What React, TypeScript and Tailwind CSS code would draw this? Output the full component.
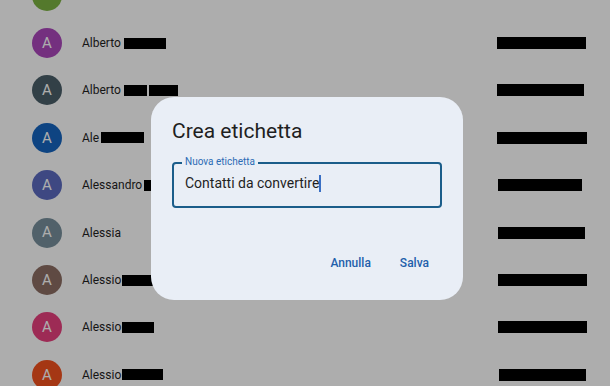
type Contact = {
  name: string;
  color: string;
  bars: string[];
  tail: string | null;
};

const contacts: Contact[] = [
  { name: "Aldo", color: "bg-[#7cb342]", bars: [], tail: null },
  { name: "Alberto", color: "bg-[#ab47bc]", bars: ["ml-[3px] w-[42px]"], tail: "w-[89px] mr-[24px]" },
  {
    name: "Alberto",
    color: "bg-[#4b5f69]",
    bars: ["ml-[3px] w-[23px]", "ml-[2px] w-[29px]"],
    tail: "w-[87px] mr-[26px]",
  },
  { name: "Ale", color: "bg-[#1565c0]", bars: ["ml-[2px] w-[43px]"], tail: "w-[90px] mr-[23px]" },
  { name: "Alessandro", color: "bg-[#5c6bc0]", bars: ["ml-[2px] w-[20px]"], tail: "w-[84px] mr-[28px]" },
  { name: "Alessia", color: "bg-[#78909c]", bars: [], tail: "w-[87px] mr-[25px]" },
  { name: "Alessio", color: "bg-[#8d6e63]", bars: ["ml-[1px] w-[40px]"], tail: "w-[89px] mr-[23px]" },
  { name: "Alessio", color: "bg-[#e8407e]", bars: ["ml-[1px] w-[32px]"], tail: "w-[89px] mr-[23px]" },
  { name: "Alessio", color: "bg-[#f4511e]", bars: ["ml-[1px] w-[41px]"], tail: "w-[87px] mr-[24px]" },
];

const Row = ({ c }: { c: Contact }) => (
  <div className="flex items-center h-[47.4px] pl-[32px]">
    <div
      className={`${c.color} w-[30px] h-[30px] rounded-full flex items-center justify-center text-white text-[15px] shrink-0`}
    >
      A
    </div>
    <span className="ml-[20px] text-[12px] text-[#1f1f1f] leading-4">{c.name}</span>
    {c.bars.map((b, i) => (
      <span key={i} className={`${b} h-[11px] bg-black`} />
    ))}
    {c.tail && <span className={`${c.tail} ml-auto h-[12px] bg-black`} />}
  </div>
);

export default function App() {
  return (
    <div
      className="relative w-[610px] h-[386px] overflow-hidden bg-white"
      style={{ fontFamily: "Roboto, 'Noto Sans', sans-serif" }}
    >
      <div className="-mt-[28px] flex flex-col">
        {contacts.map((c, i) => (
          <Row key={i} c={c} />
        ))}
      </div>

      <div className="absolute inset-0 bg-black/[0.32] pl-[151px] pt-[97px]">
        <div className="w-[312px] h-[203px] rounded-[23px] bg-[#e9eef6] pt-[20px] px-[21px]">
          <h2 className="text-[21px] leading-[28px] text-[#1f1f1f]">Crea etichetta</h2>

          <div className="relative mt-[17px] h-[46px] border-2 border-[#1b5d8a] rounded-[4px] flex items-center pl-[11px] pb-[4px]">
            <span className="absolute -top-[8px] left-[8px] px-[3px] bg-[#e9eef6] text-[10px] leading-[12px] text-[#2c6cb5]">
              Nuova etichetta
            </span>
            <span className="text-[14px] leading-5 text-[#1f1f1f]">Contatti da convertire</span>
            <span className="w-[1.5px] h-[17px] bg-[#3a6fc4]" />
          </div>

          <div className="mt-[47px] flex justify-end gap-[29px] pr-[13px] text-[12px] leading-4 font-medium text-[#1f5fab]">
            <span>Annulla</span>
            <span>Salva</span>
          </div>
        </div>
      </div>
    </div>
  );
}
